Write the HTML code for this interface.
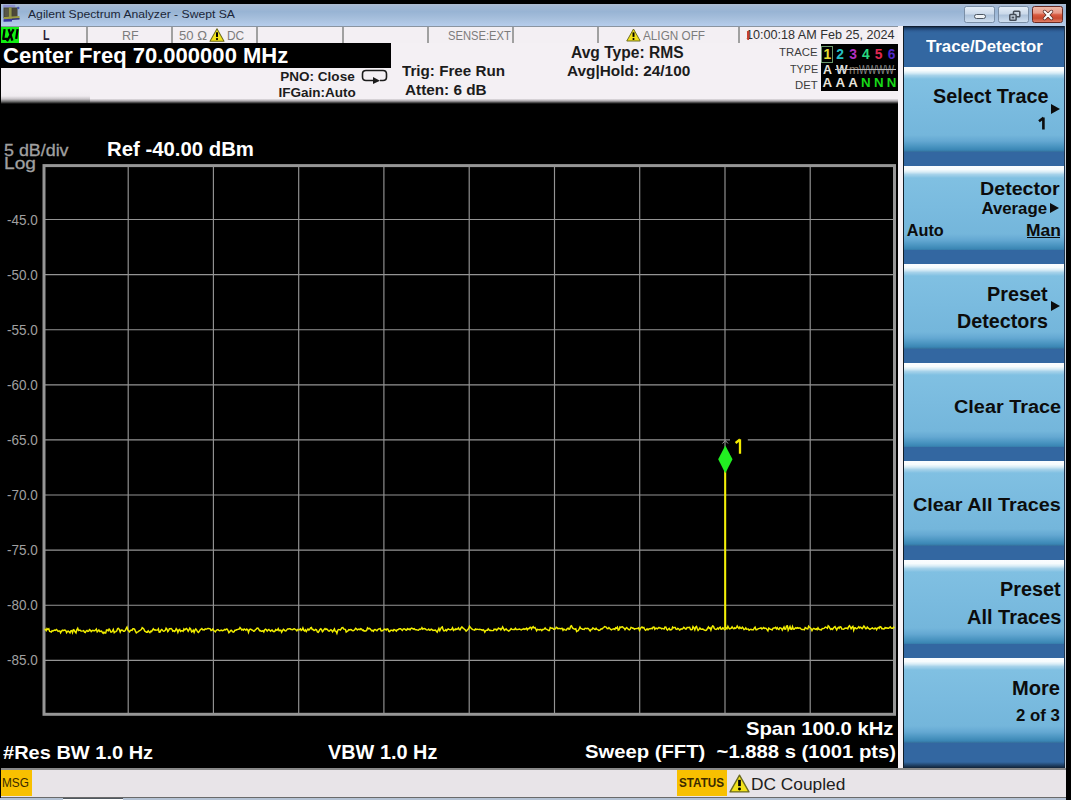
<!DOCTYPE html>
<html><head><meta charset="utf-8">
<style>
*{margin:0;padding:0;box-sizing:border-box}
html,body{width:1071px;height:800px;overflow:hidden;background:#000}
body{position:relative;font-family:"Liberation Sans",sans-serif}
.a{position:absolute;white-space:pre;line-height:1}
#title{left:1px;top:4px;width:1065px;height:22px;background:linear-gradient(#aebcd0 0,#a2b8d4 10%,#98b4d4 35%,#a6bfdc 65%,#b6cdec 100%)}
.wb{position:absolute;top:6px;height:16.5px;border:1px solid #7a8ea6;border-radius:2.5px;background:linear-gradient(#e4edf7,#cbd9ea 45%,#adc2da 55%,#cfdff0)}
#status{left:1px;top:26px;width:897px;height:18px;background:#f3eff3;border-top:1px solid #8a94a0;border-bottom:1px solid #9a9a9a}
.sep{position:absolute;top:27px;width:2px;height:16px;background:#a0a0a0}
#info{left:1px;top:43px;width:901px;height:61px;background:linear-gradient(#f4f0f4 0,#f4f0f4 55.5px,#a8a4a8 58px,#303030 60px,#000 61px)}
#info2{left:1px;top:90px;width:89px;height:14px;background:linear-gradient(#f4f0f4 0,#f0ecf0 6px,#c8c4c8 9px,#707070 11.5px,#000 14px)}
#wcol{left:898px;top:26px;width:4.5px;height:742px;background:#f6f2f6}
#cf{left:1px;top:43px;width:390px;height:25px;background:#000}
#panel{left:902.5px;top:26px;width:163.5px;height:742px;background:linear-gradient(#0c1420 0,#1e406a 2px,#2f5f98 5px,#3367a1 7px,#3367a1 100%);border-left:1.5px solid #101c28;border-right:2px solid #1d3550}
#pedge{left:1065px;top:26px;width:1px;height:742px;background:#c8d0d8}
.sk{position:absolute;left:0;width:160px;height:84.6px;background:linear-gradient(#fbfdff 0,#f6fbfd 3.5px,#d8ecf6 6px,#a6d2ea 8.5px,#80c0e2 12px,#7abbdf 40px,#74b6db 68px,#64a8d2 74px,#4c96c2 79px,#3a86b4 83px,#35719f 84.6px)}
.arr{position:absolute;width:0;height:0;border-left:9.5px solid #0c0c0c;border-top:5.6px solid transparent;border-bottom:5.6px solid transparent}
</style></head><body>

<div class="a" id="title"></div>
<svg class="a" style="left:0;top:2px" width="24" height="24" viewBox="0 2 24 24">
<rect x="3.2" y="4.8" width="12" height="2.6" fill="#8c90d0"/>
<rect x="3.5" y="7.5" width="14" height="11" fill="#404034"/>
<rect x="4.5" y="8.5" width="4" height="8" fill="#585848"/>
<rect x="8.8" y="7.5" width="2.8" height="10" fill="#909448"/>
<rect x="12.5" y="8.5" width="4.5" height="8" fill="#4c4838"/>
<path d="M4 17 L19.5 16 L19.5 18.5 L4 19.5 Z" fill="#9a9c40"/>
<path d="M3.5 19.3 L12 18.8 L12 21.5 L3.5 21.8 Z" fill="#3838a0"/>
<path d="M12 18.5 L19.5 18 L19.5 19.5 L12 20 Z" fill="#303078"/>
<circle cx="18.2" cy="8" r="1.3" fill="#4858b0"/>
</svg>
<div style="position:absolute;left:28.20px;top:9.49px;font-size:11.59px;font-weight:normal;color:#1b2638;white-space:pre;line-height:1;transform:scaleX(1.0511);transform-origin:0 0;">Agilent Spectrum Analyzer - Swept SA</div>
<div class="wb" style="left:963.5px;width:31px"><div style="position:absolute;left:9.5px;top:6.5px;width:11.5px;height:5px;background:#eef2f6;border:1px solid #4c5662;border-radius:2.5px"></div></div>
<div class="wb" style="left:997.5px;width:31px"><svg style="position:absolute;left:9px;top:2.5px" width="14" height="12" viewBox="0 0 14 12">
<rect x="5.5" y="1.2" width="6.3" height="5.6" rx="0.8" fill="#c8d4e2" stroke="#444c58" stroke-width="1.5"/>
<rect x="1.8" y="4.6" width="6.3" height="5.6" rx="0.8" fill="#c8d4e2" stroke="#444c58" stroke-width="1.5"/>
<rect x="3.6" y="6.6" width="2.6" height="1.8" fill="#444c58"/></svg></div>
<div class="wb" style="left:1032px;width:31px;border-color:#6a2a22;background:linear-gradient(#f0b8a8 0,#e89a88 40%,#d85a40 52%,#c84a30 75%,#e08068 100%)"><svg style="position:absolute;left:9px;top:2px" width="12" height="12" viewBox="0 0 12 12">
<path d="M2.6 2.6 L9.4 9.4 M9.4 2.6 L2.6 9.4" stroke="#5a2a22" stroke-width="3.6" stroke-linecap="round"/>
<path d="M2.6 2.6 L9.4 9.4 M9.4 2.6 L2.6 9.4" stroke="#fafafa" stroke-width="2.1" stroke-linecap="round"/></svg></div>
<div class="a" id="status"></div>
<div class="a" style="left:1.4px;top:26.5px;width:17.6px;height:16.7px;background:#12f012"></div>
<svg class="a" style="left:0;top:24px" width="24" height="22" viewBox="0 24 24 22"><path d="M4.6 29.2 L3.3 38.8 L7.4 38.8 M8.6 29.2 L12.4 40.6 M13.6 29.2 L7 41.2 M17.6 29.2 L16.2 38.8" stroke="#000" stroke-width="2.3" fill="none" stroke-linejoin="round"/></svg>
<div class="sep" style="left:85.7px"></div>
<div class="sep" style="left:171.0px"></div>
<div class="sep" style="left:256.0px"></div>
<div class="sep" style="left:342.0px"></div>
<div class="sep" style="left:427.0px"></div>
<div class="sep" style="left:512.2px"></div>
<div class="sep" style="left:597.3px"></div>
<div class="sep" style="left:737.7px"></div>
<div style="position:absolute;left:42.61px;top:27.78px;font-size:14.20px;font-weight:bold;color:#2c2238;white-space:pre;line-height:1;transform:scaleX(0.7519);transform-origin:0 0;">L</div>
<div style="position:absolute;left:121.70px;top:28.69px;font-size:13.48px;font-weight:normal;color:#7c7c7c;white-space:pre;line-height:1;transform:scaleX(0.9259);transform-origin:0 0;">RF</div>
<div style="position:absolute;left:179.28px;top:28.85px;font-size:13.29px;font-weight:normal;color:#7c7c7c;white-space:pre;line-height:1;transform:scaleX(0.9853);transform-origin:0 0;">50 Ω</div>
<div style="position:absolute;left:226.95px;top:28.85px;font-size:13.29px;font-weight:normal;color:#7c7c7c;white-space:pre;line-height:1;transform:scaleX(0.8975);transform-origin:0 0;">DC</div>
<div style="position:absolute;left:447.70px;top:28.85px;font-size:13.29px;font-weight:normal;color:#7c7c7c;white-space:pre;line-height:1;transform:scaleX(0.8430);transform-origin:0 0;">SENSE:EXT</div>
<div style="position:absolute;left:642.60px;top:28.95px;font-size:13.29px;font-weight:normal;color:#7c7c7c;white-space:pre;line-height:1;transform:scaleX(0.8848);transform-origin:0 0;">ALIGN OFF</div>
<div style="position:absolute;left:745.85px;top:29.34px;font-size:12.83px;font-weight:normal;color:#303030;white-space:pre;line-height:1;transform:scaleX(0.9825);transform-origin:0 0;">10:00:18 AM Feb 25, 2024</div>
<svg class="a" style="left:209px;top:28px" width="16" height="14" viewBox="0 0 20 18"><path d="M10 1 L19 17 L1 17 Z" fill="#f2e21a" stroke="#6a6a20" stroke-width="1.3" stroke-linejoin="round"/><path d="M10 5.5 L10 11.5" stroke="#000" stroke-width="2.6"/><circle cx="10" cy="14.3" r="1.4" fill="#000"/></svg>
<svg class="a" style="left:626px;top:28px" width="15" height="14" viewBox="0 0 20 18"><path d="M10 1 L19 17 L1 17 Z" fill="#f2e21a" stroke="#6a6a20" stroke-width="1.3" stroke-linejoin="round"/><path d="M10 5.5 L10 11.5" stroke="#000" stroke-width="2.6"/><circle cx="10" cy="14.3" r="1.4" fill="#000"/></svg>
<div class="a" style="left:747.3px;top:31px;width:2px;height:8.5px;background:#c84030;border-radius:1px 0 0 1px"></div>
<div class="a" id="info"></div>
<div class="a" id="info2"></div>
<div class="a" id="wcol"></div>
<div class="a" id="cf"></div>
<div style="position:absolute;left:3.22px;top:45.76px;font-size:21.43px;font-weight:bold;color:#fff;white-space:pre;line-height:1;transform:scaleX(1.0283);transform-origin:0 0;">Center Freq 70.000000 MHz</div>
<div style="position:absolute;left:280.32px;top:69.86px;font-size:13.52px;font-weight:bold;color:#1c1c1c;white-space:pre;line-height:1;">PNO: Close</div>
<div style="position:absolute;left:278.42px;top:85.56px;font-size:13.52px;font-weight:bold;color:#1c1c1c;white-space:pre;line-height:1;">IFGain:Auto</div>
<svg class="a" style="left:361px;top:69px" width="27" height="16" viewBox="0 0 27 16"><path d="M13 11.5 H5 Q1.5 11.5 1.5 8 V5 Q1.5 1.5 5 1.5 H22 Q25.5 1.5 25.5 5 V8 Q25.5 11.5 22 11.5 H19" fill="none" stroke="#1c1c1c" stroke-width="1.6"/><path d="M12 8 L19 11.8 L12 15 Z" fill="#1c1c1c"/></svg>
<div style="position:absolute;left:402.45px;top:63.97px;font-size:14.21px;font-weight:bold;color:#1c1c1c;white-space:pre;line-height:1;transform:scaleX(1.0700);transform-origin:0 0;">Trig: Free Run</div>
<div style="position:absolute;left:405.02px;top:82.67px;font-size:14.21px;font-weight:bold;color:#1c1c1c;white-space:pre;line-height:1;transform:scaleX(1.0772);transform-origin:0 0;">Atten: 6 dB</div>
<div style="position:absolute;left:571.01px;top:45.26px;font-size:16.00px;font-weight:bold;color:#1c1c1c;white-space:pre;line-height:1;transform:scaleX(0.9742);transform-origin:0 0;">Avg Type: RMS</div>
<div style="position:absolute;left:566.72px;top:63.82px;font-size:14.62px;font-weight:bold;color:#1c1c1c;white-space:pre;line-height:1;transform:scaleX(1.0515);transform-origin:0 0;">Avg|Hold: 24/100</div>
<div class="a" style="left:821px;top:44px;width:77px;height:47px;background:#000"></div>
<div style="position:absolute;left:779.47px;top:47.15px;font-size:11.29px;font-weight:normal;color:#3c3c3c;white-space:pre;line-height:1;transform:scaleX(1.0073);transform-origin:0 0;">TRACE</div>
<div style="position:absolute;left:789.78px;top:63.51px;font-size:11.45px;font-weight:normal;color:#3c3c3c;white-space:pre;line-height:1;transform:scaleX(0.9419);transform-origin:0 0;">TYPE</div>
<div style="position:absolute;left:795.09px;top:79.69px;font-size:11.59px;font-weight:normal;color:#3c3c3c;white-space:pre;line-height:1;transform:scaleX(0.9760);transform-origin:0 0;">DET</div>
<div class="a" style="left:821px;top:46px;width:12px;height:17px;border:1.5px solid #6c9a6c"></div>
<div class="a" style="left:821.3px;top:47.8px;width:12px;text-align:center;font-size:13.8px;font-weight:bold;color:#e8e030">1</div>
<div class="a" style="left:834.2px;top:47.8px;width:12px;text-align:center;font-size:13.8px;font-weight:bold;color:#28c0c8">2</div>
<div class="a" style="left:847.0px;top:47.8px;width:12px;text-align:center;font-size:13.8px;font-weight:bold;color:#b030c0">3</div>
<div class="a" style="left:859.9px;top:47.8px;width:12px;text-align:center;font-size:13.8px;font-weight:bold;color:#28d880">4</div>
<div class="a" style="left:872.7px;top:47.8px;width:12px;text-align:center;font-size:13.8px;font-weight:bold;color:#e02850">5</div>
<div class="a" style="left:885.6px;top:47.8px;width:12px;text-align:center;font-size:13.8px;font-weight:bold;color:#5028c8">6</div>
<div class="a" style="left:821.3px;top:76.4px;width:12px;text-align:center;font-size:13.3px;font-weight:bold;color:#e8e4dc">A</div>
<div class="a" style="left:834.2px;top:76.4px;width:12px;text-align:center;font-size:13.3px;font-weight:bold;color:#e8e4dc">A</div>
<div class="a" style="left:847.0px;top:76.4px;width:12px;text-align:center;font-size:13.3px;font-weight:bold;color:#e8e4dc">A</div>
<div class="a" style="left:859.9px;top:76.4px;width:12px;text-align:center;font-size:13.3px;font-weight:bold;color:#18d818">N</div>
<div class="a" style="left:872.7px;top:76.4px;width:12px;text-align:center;font-size:13.3px;font-weight:bold;color:#18d818">N</div>
<div class="a" style="left:885.6px;top:76.4px;width:12px;text-align:center;font-size:13.3px;font-weight:bold;color:#18d818">N</div>
<div style="position:absolute;left:823.39px;top:63.04px;font-size:13.19px;font-weight:bold;color:#e8e4dc;white-space:pre;line-height:1;transform:scaleX(0.9393);transform-origin:0 0;">A</div>
<div style="position:absolute;left:836.40px;top:63.04px;font-size:13.19px;font-weight:bold;color:#dcdcdc;white-space:pre;line-height:1;transform:scaleX(0.9308);transform-origin:0 0;">W</div>
<div style="position:absolute;left:849.21px;top:62.91px;font-size:13.33px;font-weight:normal;color:#8c7c68;white-space:pre;line-height:1;transform:scaleX(0.9149);transform-origin:0 0;">m</div>
<div style="position:absolute;left:859.35px;top:63.04px;font-size:13.19px;font-weight:normal;color:#8a8a8a;white-space:pre;line-height:1;transform:scaleX(0.7049);transform-origin:0 0;">WWWW</div>
<div class="a" style="left:835px;top:69px;width:61px;height:1.2px;background:#c8c8c8"></div>
<div class="a" id="panel">
<div class="sk" style="top:41.2px"></div>
<div class="sk" style="top:139.7px"></div>
<div class="sk" style="top:238.3px"></div>
<div class="sk" style="top:336.8px"></div>
<div class="sk" style="top:435.3px"></div>
<div class="sk" style="top:533.9px"></div>
<div class="sk" style="top:632.4px"></div>
</div>
<div class="a" id="pedge"></div>
<div style="position:absolute;left:925.63px;top:38.02px;font-size:17.10px;font-weight:bold;color:#fff;white-space:pre;line-height:1;transform:scaleX(0.9828);transform-origin:0 0;">Trace/Detector</div>
<div style="position:absolute;left:932.81px;top:87.34px;font-size:19.45px;font-weight:bold;color:#0c0c0c;white-space:pre;line-height:1;transform:scaleX(1.0177);transform-origin:0 0;">Select Trace</div>
<div class="arr" style="left:1050.8px;top:104px"></div>
<svg class="a" style="left:1030px;top:110px" width="20" height="25"><path d="M13.4 7.6V19.4M13.6 7.8L9 11.3" stroke="#0c0c0c" stroke-width="2.6" fill="none"/></svg>
<div style="position:absolute;left:980.12px;top:179.75px;font-size:18.84px;font-weight:bold;color:#0c0c0c;white-space:pre;line-height:1;transform:scaleX(1.0442);transform-origin:0 0;">Detector</div>
<div style="position:absolute;left:981.38px;top:200.87px;font-size:16.81px;font-weight:bold;color:#0c0c0c;white-space:pre;line-height:1;">Average</div>
<div class="arr" style="left:1050.2px;top:203.3px"></div>
<div style="position:absolute;left:906.79px;top:221.66px;font-size:16.23px;font-weight:bold;color:#0c0c0c;white-space:pre;line-height:1;">Auto</div>
<div style="position:absolute;left:1025.87px;top:221.66px;font-size:16.23px;font-weight:bold;color:#0c0c0c;white-space:pre;line-height:1;transform:scaleX(1.0744);transform-origin:0 0;">Man</div>
<div class="a" style="left:1027px;top:236.6px;width:32.7px;height:1.6px;background:#0c0c0c"></div>
<div style="position:absolute;left:987.31px;top:284.62px;font-size:19.71px;font-weight:bold;color:#0c0c0c;white-space:pre;line-height:1;transform:scaleX(1.0062);transform-origin:0 0;">Preset</div>
<div class="arr" style="left:1050.8px;top:301.3px"></div>
<div style="position:absolute;left:957.02px;top:311.72px;font-size:19.71px;font-weight:bold;color:#0c0c0c;white-space:pre;line-height:1;">Detectors</div>
<div style="position:absolute;left:953.71px;top:397.07px;font-size:19.17px;font-weight:bold;color:#0c0c0c;white-space:pre;line-height:1;transform:scaleX(1.0363);transform-origin:0 0;">Clear Trace</div>
<div style="position:absolute;left:913.01px;top:496.34px;font-size:18.62px;font-weight:bold;color:#0c0c0c;white-space:pre;line-height:1;transform:scaleX(1.0639);transform-origin:0 0;">Clear All Traces</div>
<div style="position:absolute;left:999.71px;top:580.46px;font-size:19.42px;font-weight:bold;color:#0c0c0c;white-space:pre;line-height:1;transform:scaleX(1.0195);transform-origin:0 0;">Preset</div>
<div style="position:absolute;left:966.50px;top:608.09px;font-size:19.86px;font-weight:bold;color:#0c0c0c;white-space:pre;line-height:1;transform:scaleX(1.0048);transform-origin:0 0;">All Traces</div>
<div style="position:absolute;left:1012.29px;top:678.32px;font-size:20.29px;font-weight:bold;color:#0c0c0c;white-space:pre;line-height:1;transform:scaleX(0.9900);transform-origin:0 0;">More</div>
<div style="position:absolute;left:1015.81px;top:707.57px;font-size:15.86px;font-weight:bold;color:#0c0c0c;white-space:pre;line-height:1;transform:scaleX(1.0573);transform-origin:0 0;">2 of 3</div>
<svg class="a" style="left:0;top:0" width="902" height="800" viewBox="0 0 902 800"><path d="M128.2 166V714M45 219.5H894M213.4 166V714M45 274.6H894M298.7 166V714M45 329.7H894M383.9 166V714M45 384.8H894M469.2 166V714M45 439.9H894M554.5 166V714M45 495.0H894M639.7 166V714M45 550.1H894M725.0 166V714M45 605.2H894M810.2 166V714M45 660.3H894" stroke="#949494" stroke-width="1.15" fill="none"/><rect x="44" y="165.6" width="850.5" height="548.7" fill="none" stroke="#969696" stroke-width="3"/><polyline points="44.5,629.0 45.4,629.5 46.2,630.6 47.0,628.6 47.9,629.5 48.8,628.8 49.6,631.4 50.5,631.6 51.3,632.1 52.1,630.7 53.0,631.0 53.9,630.4 54.7,630.0 55.5,630.4 56.4,629.5 57.2,630.3 58.1,631.4 59.0,630.9 59.8,630.9 60.6,632.8 61.5,631.2 62.4,630.2 63.2,630.6 64.0,630.2 64.9,630.1 65.8,630.8 66.6,632.7 67.5,631.3 68.3,631.1 69.2,631.9 70.0,632.8 70.8,630.8 71.7,630.6 72.5,632.7 73.4,629.8 74.2,630.1 75.1,631.8 76.0,632.9 76.8,629.7 77.7,628.2 78.5,630.6 79.3,630.2 80.2,630.3 81.0,631.1 81.9,631.1 82.8,630.9 83.6,630.6 84.5,632.2 85.3,632.5 86.2,631.0 87.0,630.4 87.8,631.4 88.7,631.1 89.5,629.6 90.4,630.2 91.2,631.6 92.1,630.7 93.0,630.3 93.8,630.8 94.7,630.7 95.5,630.1 96.3,629.1 97.2,631.9 98.0,631.0 98.9,630.0 99.8,631.5 100.6,631.2 101.5,631.0 102.3,632.2 103.2,633.3 104.0,632.1 104.8,632.9 105.7,632.9 106.5,630.0 107.4,630.0 108.2,630.8 109.1,629.0 110.0,630.2 110.8,632.1 111.7,632.1 112.5,630.9 113.3,629.4 114.2,632.6 115.0,631.9 115.9,631.6 116.8,630.8 117.6,628.6 118.5,628.4 119.3,629.5 120.2,632.0 121.0,630.1 121.8,630.0 122.7,630.4 123.5,631.2 124.4,631.2 125.2,630.6 126.1,628.6 127.0,627.1 127.8,630.0 128.7,631.1 129.5,631.8 130.3,630.6 131.2,630.0 132.1,630.4 132.9,628.8 133.8,628.8 134.6,629.3 135.4,631.1 136.3,632.9 137.2,632.1 138.0,631.9 138.8,631.1 139.7,630.7 140.6,630.0 141.4,629.5 142.2,627.7 143.1,628.3 143.9,629.1 144.8,631.2 145.7,631.6 146.5,632.2 147.3,632.2 148.2,630.8 149.1,631.9 149.9,632.7 150.8,631.2 151.6,631.5 152.4,630.1 153.3,628.8 154.2,630.0 155.0,629.7 155.8,630.2 156.7,630.1 157.6,630.1 158.4,628.9 159.2,632.3 160.1,632.2 160.9,630.2 161.8,629.4 162.7,630.4 163.5,631.2 164.3,631.1 165.2,630.4 166.1,628.2 166.9,629.1 167.8,631.5 168.6,630.6 169.4,628.7 170.3,628.8 171.2,628.5 172.0,629.3 172.8,631.2 173.7,630.7 174.6,631.5 175.4,630.5 176.2,628.7 177.1,629.9 177.9,632.3 178.8,629.9 179.7,629.4 180.5,631.4 181.3,630.8 182.2,630.7 183.1,631.4 183.9,629.0 184.8,630.0 185.6,629.0 186.4,628.4 187.3,629.4 188.2,631.3 189.0,630.0 189.8,628.1 190.7,629.1 191.6,631.9 192.4,631.5 193.2,630.1 194.1,632.4 194.9,630.2 195.8,629.0 196.7,630.1 197.5,631.6 198.3,632.4 199.2,631.6 200.1,630.0 200.9,629.2 201.8,628.6 202.6,629.7 203.4,629.7 204.3,630.0 205.2,628.9 206.0,629.2 206.8,628.9 207.7,628.5 208.6,628.5 209.4,628.6 210.2,628.9 211.1,630.6 211.9,630.2 212.8,629.1 213.7,630.5 214.5,631.0 215.3,631.8 216.2,630.4 217.1,629.8 217.9,629.5 218.8,630.3 219.6,630.8 220.4,630.5 221.3,630.1 222.2,630.8 223.0,630.5 223.8,630.2 224.7,629.4 225.6,629.9 226.4,629.0 227.2,629.1 228.1,630.7 228.9,632.6 229.8,631.7 230.7,630.4 231.5,630.3 232.3,631.5 233.2,632.2 234.1,631.7 234.9,630.3 235.8,630.2 236.6,629.8 237.4,629.6 238.3,629.2 239.2,629.1 240.0,627.6 240.8,628.5 241.7,630.0 242.6,629.4 243.4,630.1 244.2,628.9 245.1,629.5 245.9,630.2 246.8,629.0 247.7,629.8 248.5,632.3 249.3,629.9 250.2,629.1 251.1,629.4 251.9,630.0 252.8,630.3 253.6,631.3 254.4,631.1 255.3,629.8 256.1,629.3 257.0,628.2 257.9,628.0 258.7,629.1 259.6,630.7 260.4,630.6 261.2,631.2 262.1,631.2 262.9,630.7 263.8,632.0 264.6,629.9 265.5,629.2 266.4,629.8 267.2,631.1 268.1,630.0 268.9,629.4 269.8,630.6 270.6,631.3 271.4,630.2 272.3,630.0 273.1,631.3 274.0,631.6 274.9,631.1 275.7,629.6 276.6,630.2 277.4,630.0 278.2,628.6 279.1,630.8 279.9,630.3 280.8,630.3 281.6,632.3 282.5,630.6 283.4,629.3 284.2,629.9 285.1,630.8 285.9,631.0 286.8,629.9 287.6,628.9 288.4,628.9 289.3,628.7 290.1,628.7 291.0,629.6 291.9,629.5 292.7,629.7 293.6,628.9 294.4,628.8 295.2,629.5 296.1,629.9 296.9,630.8 297.8,629.4 298.6,629.9 299.5,629.6 300.4,628.8 301.2,630.4 302.1,629.8 302.9,628.0 303.8,630.3 304.6,630.9 305.4,629.8 306.3,631.5 307.1,630.2 308.0,628.9 308.9,630.1 309.7,629.4 310.6,627.9 311.4,627.5 312.2,629.4 313.1,629.4 313.9,630.5 314.8,630.3 315.6,629.3 316.5,629.7 317.4,632.0 318.2,632.3 319.1,631.0 319.9,629.5 320.8,628.7 321.6,629.7 322.4,631.6 323.3,630.7 324.1,629.4 325.0,628.6 325.9,629.5 326.7,629.0 327.6,629.8 328.4,630.9 329.2,631.2 330.1,630.2 330.9,629.6 331.8,630.5 332.6,631.8 333.5,630.3 334.4,628.9 335.2,631.1 336.1,631.4 336.9,633.3 337.8,630.2 338.6,629.5 339.4,629.6 340.3,630.0 341.1,629.0 342.0,627.7 342.9,627.5 343.7,629.1 344.6,629.1 345.4,629.6 346.2,632.0 347.1,631.4 347.9,631.0 348.8,629.6 349.6,629.9 350.5,629.6 351.4,629.7 352.2,630.6 353.1,630.7 353.9,630.3 354.8,629.6 355.6,628.2 356.4,628.8 357.3,629.9 358.1,629.3 359.0,629.0 359.9,629.7 360.7,628.7 361.6,629.1 362.4,630.4 363.2,630.0 364.1,631.2 364.9,630.8 365.8,631.0 366.6,630.5 367.5,627.8 368.4,628.8 369.2,628.3 370.1,628.9 370.9,629.8 371.8,630.9 372.6,630.4 373.4,631.2 374.3,629.6 375.1,629.5 376.0,630.0 376.9,630.7 377.7,629.7 378.6,629.0 379.4,628.9 380.2,628.5 381.1,630.8 381.9,630.9 382.8,630.4 383.6,629.9 384.5,629.0 385.4,629.3 386.2,630.2 387.1,628.9 387.9,629.1 388.8,631.5 389.6,631.7 390.4,630.5 391.3,630.3 392.1,630.3 393.0,631.0 393.9,629.6 394.7,629.7 395.6,630.5 396.4,631.2 397.2,629.8 398.1,629.7 398.9,629.0 399.8,628.7 400.6,628.8 401.5,629.8 402.4,630.4 403.2,629.0 404.1,628.7 404.9,629.1 405.8,630.0 406.6,630.1 407.4,628.6 408.3,629.4 409.1,628.9 410.0,629.8 410.9,628.5 411.7,628.1 412.6,628.6 413.4,629.1 414.2,628.6 415.1,629.6 415.9,629.8 416.8,629.8 417.6,630.1 418.5,630.3 419.4,629.1 420.2,629.4 421.1,629.0 421.9,627.6 422.8,629.2 423.6,628.7 424.4,628.5 425.3,628.9 426.1,629.6 427.0,630.0 427.9,629.9 428.7,629.1 429.6,630.2 430.4,630.0 431.2,629.2 432.1,629.6 432.9,630.4 433.8,630.3 434.6,630.3 435.5,630.1 436.4,631.2 437.2,632.1 438.1,630.1 438.9,628.4 439.8,630.7 440.6,629.0 441.4,627.4 442.3,626.9 443.1,629.6 444.0,630.9 444.9,630.7 445.7,629.7 446.6,630.8 447.4,629.6 448.2,628.9 449.1,629.4 449.9,629.7 450.8,629.7 451.6,629.3 452.5,627.8 453.4,630.3 454.2,629.4 455.1,629.8 455.9,628.8 456.8,629.4 457.6,628.9 458.4,627.9 459.3,629.6 460.1,629.9 461.0,627.9 461.9,626.9 462.7,628.0 463.6,628.4 464.4,629.3 465.2,629.8 466.1,631.2 466.9,630.4 467.8,629.4 468.6,628.8 469.5,626.3 470.4,627.5 471.2,628.2 472.1,629.1 472.9,629.7 473.8,629.9 474.6,630.2 475.4,629.0 476.3,629.5 477.1,629.3 478.0,629.4 478.9,629.6 479.7,629.2 480.6,629.5 481.4,629.6 482.2,630.3 483.1,629.6 483.9,630.3 484.8,632.2 485.6,630.7 486.5,630.3 487.4,630.3 488.2,628.8 489.1,630.0 489.9,630.4 490.8,630.2 491.6,630.6 492.4,630.6 493.3,630.5 494.1,629.1 495.0,629.5 495.9,629.2 496.7,630.4 497.6,629.4 498.4,628.1 499.2,628.8 500.1,628.6 500.9,629.9 501.8,628.7 502.6,626.9 503.5,628.6 504.4,630.3 505.2,629.7 506.1,628.9 506.9,629.9 507.8,630.4 508.6,631.1 509.4,630.6 510.3,629.7 511.1,628.6 512.0,629.4 512.9,629.6 513.7,629.4 514.5,629.4 515.4,628.3 516.2,629.5 517.1,629.5 518.0,629.6 518.8,629.2 519.6,629.0 520.5,629.6 521.4,630.0 522.2,629.2 523.0,629.3 523.9,628.6 524.8,629.4 525.6,629.0 526.5,628.2 527.3,629.8 528.1,628.6 529.0,628.7 529.9,627.5 530.7,627.3 531.5,629.1 532.4,627.4 533.2,626.7 534.1,628.1 535.0,627.5 535.8,629.0 536.6,630.8 537.5,629.3 538.4,629.6 539.2,629.9 540.0,629.5 540.9,629.5 541.8,630.6 542.6,629.5 543.5,629.5 544.3,629.0 545.1,628.0 546.0,629.2 546.9,629.4 547.7,630.0 548.5,630.4 549.4,630.4 550.2,627.5 551.1,628.0 552.0,628.3 552.8,628.3 553.6,629.3 554.5,629.2 555.4,628.8 556.2,627.3 557.0,627.7 557.9,628.7 558.8,628.5 559.6,628.4 560.5,628.8 561.3,628.5 562.1,628.4 563.0,630.3 563.9,629.0 564.7,629.7 565.5,630.1 566.4,630.0 567.2,628.5 568.1,628.1 569.0,629.3 569.8,628.9 570.6,626.2 571.5,625.8 572.4,627.8 573.2,628.5 574.0,628.8 574.9,629.2 575.8,628.8 576.6,631.6 577.5,630.9 578.3,630.6 579.1,629.1 580.0,627.1 580.9,628.6 581.7,628.7 582.5,629.3 583.4,629.2 584.2,629.4 585.1,628.2 586.0,628.4 586.8,628.7 587.6,628.2 588.5,628.5 589.4,630.0 590.2,631.0 591.0,629.5 591.9,629.5 592.8,628.0 593.6,628.3 594.5,629.3 595.3,629.4 596.1,628.3 597.0,629.4 597.9,629.6 598.7,630.5 599.5,630.4 600.4,629.6 601.2,628.8 602.1,628.9 603.0,628.0 603.8,627.5 604.6,626.6 605.5,626.9 606.4,627.3 607.2,628.6 608.0,628.7 608.9,627.6 609.8,628.6 610.6,629.5 611.5,629.9 612.3,629.1 613.1,629.0 614.0,628.8 614.9,629.4 615.7,627.7 616.5,628.2 617.4,627.1 618.2,630.2 619.1,629.7 620.0,626.9 620.8,627.5 621.6,626.9 622.5,626.7 623.4,627.8 624.2,628.2 625.0,629.6 625.9,628.3 626.8,627.6 627.6,628.6 628.5,629.4 629.3,629.9 630.1,629.2 631.0,627.3 631.9,627.6 632.7,628.3 633.5,628.2 634.4,629.3 635.2,628.7 636.1,628.6 637.0,628.5 637.8,628.4 638.6,627.9 639.5,630.4 640.4,628.6 641.2,627.5 642.0,626.9 642.9,627.9 643.8,627.5 644.6,629.1 645.5,630.2 646.3,629.6 647.1,628.8 648.0,629.9 648.9,628.9 649.7,628.7 650.5,628.7 651.4,628.4 652.2,628.8 653.1,627.2 654.0,627.0 654.8,629.3 655.6,628.2 656.5,628.3 657.4,628.9 658.2,628.1 659.0,627.4 659.9,628.0 660.8,627.9 661.6,628.9 662.5,628.4 663.3,628.6 664.1,629.0 665.0,627.0 665.9,627.1 666.7,629.4 667.5,630.2 668.4,628.9 669.2,628.3 670.1,629.9 671.0,629.8 671.8,629.4 672.6,627.1 673.5,627.9 674.4,627.4 675.2,627.5 676.0,629.2 676.9,629.4 677.8,628.3 678.6,628.7 679.5,630.1 680.3,629.6 681.1,628.8 682.0,629.2 682.9,628.6 683.7,627.3 684.5,627.9 685.4,629.0 686.2,629.0 687.1,627.4 688.0,627.4 688.8,627.5 689.6,627.3 690.5,629.5 691.4,629.7 692.2,629.5 693.0,626.6 693.9,627.8 694.8,629.9 695.6,627.2 696.5,626.5 697.3,628.8 698.1,630.4 699.0,629.4 699.9,628.0 700.7,629.0 701.5,629.2 702.4,629.1 703.2,629.3 704.1,629.8 705.0,630.3 705.8,630.5 706.6,629.9 707.5,628.3 708.4,626.9 709.2,628.3 710.0,627.8 710.9,630.2 711.8,627.5 712.6,626.0 713.5,626.4 714.3,628.6 715.1,629.1 716.0,629.4 716.9,628.8 717.7,628.1 718.5,629.0 719.4,627.7 720.2,627.1 721.1,629.2 722.0,629.1 722.8,627.7 723.6,628.3 724.5,629.7 725.4,629.4 726.2,628.0 727.0,628.7 727.9,626.3 728.8,628.1 729.6,628.9 730.5,628.5 731.3,628.2 732.1,626.9 733.0,628.1 733.9,628.7 734.7,627.7 735.5,628.4 736.4,627.8 737.2,626.1 738.1,627.5 739.0,628.5 739.8,627.1 740.6,628.2 741.5,628.5 742.4,627.2 743.2,628.1 744.0,629.5 744.9,629.2 745.8,627.9 746.6,629.3 747.5,629.1 748.3,629.0 749.1,630.2 750.0,629.6 750.9,629.2 751.7,629.7 752.5,629.7 753.4,629.8 754.2,628.2 755.1,627.1 756.0,629.7 756.8,629.7 757.6,629.2 758.5,628.6 759.4,628.4 760.2,628.3 761.0,627.7 761.9,629.0 762.8,628.5 763.6,627.6 764.5,628.4 765.3,628.2 766.1,628.4 767.0,629.6 767.9,630.9 768.7,628.1 769.5,628.7 770.4,629.3 771.2,629.4 772.1,629.9 773.0,628.3 773.8,628.0 774.6,628.0 775.5,627.3 776.4,628.8 777.2,627.6 778.0,628.9 778.9,629.5 779.8,627.8 780.6,627.9 781.5,628.5 782.3,630.1 783.1,628.6 784.0,627.0 784.9,629.2 785.7,629.1 786.5,626.0 787.4,625.8 788.2,630.3 789.1,628.5 790.0,626.5 790.8,629.2 791.6,629.4 792.5,626.6 793.4,629.2 794.2,629.3 795.0,628.3 795.9,627.7 796.8,628.3 797.6,627.6 798.5,628.2 799.3,628.0 800.1,627.9 801.0,629.0 801.9,629.6 802.7,629.5 803.5,629.4 804.4,629.8 805.2,627.5 806.1,628.1 807.0,628.8 807.8,629.0 808.6,626.2 809.5,627.2 810.4,627.9 811.2,628.9 812.0,630.6 812.9,629.0 813.8,628.3 814.6,628.9 815.5,629.3 816.3,628.7 817.1,629.6 818.0,627.8 818.9,629.4 819.7,629.5 820.5,629.8 821.4,630.0 822.2,628.5 823.1,628.6 824.0,628.4 824.8,627.5 825.6,627.1 826.5,627.5 827.4,628.3 828.2,625.8 829.0,626.4 829.9,628.3 830.8,629.5 831.6,628.7 832.5,629.4 833.3,628.3 834.1,627.3 835.0,626.6 835.9,628.4 836.7,630.0 837.5,628.4 838.4,627.3 839.2,628.2 840.1,626.7 841.0,627.0 841.8,629.1 842.6,629.1 843.5,629.3 844.4,628.6 845.2,628.1 846.0,628.2 846.9,628.1 847.8,628.8 848.6,626.7 849.5,625.7 850.3,627.1 851.1,628.7 852.0,627.3 852.9,626.4 853.7,630.2 854.5,627.9 855.4,627.8 856.2,628.7 857.1,628.6 858.0,627.7 858.8,626.7 859.6,628.0 860.5,627.2 861.4,627.9 862.2,628.7 863.0,627.5 863.9,626.1 864.8,627.2 865.6,628.7 866.5,628.6 867.3,627.0 868.1,627.9 869.0,628.7 869.9,629.3 870.7,628.8 871.5,628.3 872.4,627.9 873.2,628.7 874.1,628.9 875.0,628.0 875.8,628.2 876.6,629.7 877.5,628.2 878.4,627.4 879.2,628.2 880.0,626.7 880.9,626.9 881.8,628.7 882.6,628.5 883.5,629.0 884.3,628.8 885.1,627.6 886.0,628.2 886.9,627.8 887.7,628.2 888.5,628.3 889.4,627.7 890.2,626.8 891.1,628.0 892.0,628.2 892.8,628.3 893.6,627.1 894.5,628.0" fill="none" stroke="#f2ee00" stroke-width="1.45"/><path d="M725.2 459V628" stroke="#f4f000" stroke-width="2"/><path d="M725.3 445.5 L732.5 459.3 L725.3 473.2 L718.2 459.3 Z" fill="#22ee22"/><path d="M722.5 443.5 L725.2 440.5 L728 443.5" stroke="#a0a0a0" stroke-width="1" fill="none"/></svg>
<svg class="a" style="left:0;top:0" width="902" height="800"><rect x="730" y="437" width="17.8" height="18" fill="#000"/><path d="M740 439.2V453.8M740 439.5L735.6 443" stroke="#f2ea00" stroke-width="2.3" fill="none"/></svg>
<div style="position:absolute;left:7.19px;top:212.59px;font-size:14.43px;font-weight:normal;color:#a0a0a0;white-space:pre;line-height:1;transform:scaleX(0.9356);transform-origin:0 0;">-45.0</div>
<div style="position:absolute;left:7.19px;top:267.59px;font-size:14.43px;font-weight:normal;color:#a0a0a0;white-space:pre;line-height:1;transform:scaleX(0.9356);transform-origin:0 0;">-50.0</div>
<div style="position:absolute;left:7.19px;top:322.59px;font-size:14.43px;font-weight:normal;color:#a0a0a0;white-space:pre;line-height:1;transform:scaleX(0.9356);transform-origin:0 0;">-55.0</div>
<div style="position:absolute;left:7.19px;top:377.59px;font-size:14.43px;font-weight:normal;color:#a0a0a0;white-space:pre;line-height:1;transform:scaleX(0.9356);transform-origin:0 0;">-60.0</div>
<div style="position:absolute;left:7.19px;top:432.59px;font-size:14.43px;font-weight:normal;color:#a0a0a0;white-space:pre;line-height:1;transform:scaleX(0.9356);transform-origin:0 0;">-65.0</div>
<div style="position:absolute;left:7.19px;top:487.59px;font-size:14.43px;font-weight:normal;color:#a0a0a0;white-space:pre;line-height:1;transform:scaleX(0.9356);transform-origin:0 0;">-70.0</div>
<div style="position:absolute;left:7.19px;top:542.59px;font-size:14.43px;font-weight:normal;color:#a0a0a0;white-space:pre;line-height:1;transform:scaleX(0.9356);transform-origin:0 0;">-75.0</div>
<div style="position:absolute;left:7.19px;top:597.59px;font-size:14.43px;font-weight:normal;color:#a0a0a0;white-space:pre;line-height:1;transform:scaleX(0.9356);transform-origin:0 0;">-80.0</div>
<div style="position:absolute;left:7.19px;top:652.59px;font-size:14.43px;font-weight:normal;color:#a0a0a0;white-space:pre;line-height:1;transform:scaleX(0.9356);transform-origin:0 0;">-85.0</div>
<div style="position:absolute;left:4.19px;top:141.92px;font-size:16.28px;font-weight:normal;color:#a0a0a0;white-space:pre;line-height:1;transform:scaleX(1.0980);transform-origin:0 0;-webkit-text-stroke:0.3px #a0a0a0;">5 dB/div</div>
<div style="position:absolute;left:4.47px;top:154.82px;font-size:17.10px;font-weight:normal;color:#a0a0a0;white-space:pre;line-height:1;transform:scaleX(1.1195);transform-origin:0 0;-webkit-text-stroke:0.3px #a0a0a0;">Log</div>
<div style="position:absolute;left:107.38px;top:139.55px;font-size:19.31px;font-weight:bold;color:#fff;white-space:pre;line-height:1;transform:scaleX(1.0539);transform-origin:0 0;">Ref -40.00 dBm</div>
<div style="position:absolute;left:3.40px;top:742.60px;font-size:19.14px;font-weight:bold;color:#fff;white-space:pre;line-height:1;transform:scaleX(1.0462);transform-origin:0 0;">#Res BW 1.0 Hz</div>
<div style="position:absolute;left:328.10px;top:741.57px;font-size:20.00px;font-weight:bold;color:#fff;white-space:pre;line-height:1;transform:scaleX(0.9936);transform-origin:0 0;">VBW 1.0 Hz</div>
<div style="position:absolute;left:746.39px;top:720.25px;font-size:18.48px;font-weight:bold;color:#fff;white-space:pre;line-height:1;transform:scaleX(1.0963);transform-origin:0 0;">Span 100.0 kHz</div>
<div style="position:absolute;left:585.29px;top:742.02px;font-size:19.00px;font-weight:bold;color:#fff;white-space:pre;line-height:1;transform:scaleX(1.0654);transform-origin:0 0;">Sweep (FFT)  ~1.888 s (1001 pts)</div>
<div class="a" style="left:1px;top:768px;width:1065px;height:30px;background:#e8e4e8;border-top:2px solid #8a8a8a;border-bottom:1.6px solid #6a6a6a"></div>
<div class="a" style="left:1px;top:770px;width:31px;height:26px;background:#f8c000"></div>
<div style="position:absolute;left:2.36px;top:777.96px;font-size:11.86px;font-weight:normal;color:#3a2a00;white-space:pre;line-height:1;transform:scaleX(0.9962);transform-origin:0 0;">MSG</div>
<div class="a" style="left:677px;top:770px;width:50px;height:26px;background:#f8c000"></div>
<div style="position:absolute;left:678.65px;top:777.76px;font-size:11.86px;font-weight:bold;color:#3a2a00;white-space:pre;line-height:1;transform:scaleX(0.9849);transform-origin:0 0;">STATUS</div>
<svg class="a" style="left:729px;top:774px" width="21" height="19" viewBox="0 0 20 18"><path d="M10 1 L19 17 L1 17 Z" fill="#f2e21a" stroke="#6a6a20" stroke-width="1.3" stroke-linejoin="round"/><path d="M10 5.5 L10 11.5" stroke="#000" stroke-width="2.6"/><circle cx="10" cy="14.3" r="1.4" fill="#000"/></svg>
<div style="position:absolute;left:750.61px;top:776.56px;font-size:16.00px;font-weight:normal;color:#202020;white-space:pre;line-height:1;transform:scaleX(1.0825);transform-origin:0 0;">DC Coupled</div>
<div class="a" style="left:0;top:798px;width:1071px;height:2px;background:#b4c2d4"></div>
<div class="a" style="left:1066px;top:0;width:5px;height:800px;background:#000"></div>
<div class="a" style="left:63px;top:797.5px;width:60px;height:2.5px;background:#fff;border-top:1px solid #505860"></div>
<div class="a" style="left:904px;top:762px;width:161px;height:6px;background:linear-gradient(rgba(12,26,42,0),rgba(12,26,42,0.9))"></div>
</body></html>
